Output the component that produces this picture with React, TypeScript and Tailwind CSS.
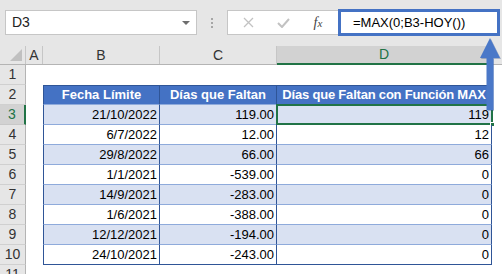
import React from 'react';

const rows = [
  { n: 3, b: '21/10/2022', c: '119.00', d: '119' },
  { n: 4, b: '6/7/2022', c: '12.00', d: '12' },
  { n: 5, b: '29/8/2022', c: '66.00', d: '66' },
  { n: 6, b: '1/1/2021', c: '-539.00', d: '0' },
  { n: 7, b: '14/9/2021', c: '-283.00', d: '0' },
  { n: 8, b: '1/6/2021', c: '-388.00', d: '0' },
  { n: 9, b: '12/12/2021', c: '-194.00', d: '0' },
  { n: 10, b: '24/10/2021', c: '-243.00', d: '0' },
];

const RowHead = ({ n, active }: { n: number; active?: boolean }) => (
  <div
    className={
      active
        ? 'w-[26px] h-full flex items-center justify-center bg-[#d2d2d2] text-[#217346] border-b border-b-[#c8c8c8] border-r-2 border-r-[#217346] text-[14px]'
        : 'w-[26px] h-full flex items-center justify-center bg-[#e6e6e6] text-[#333] border-b border-b-[#d0d0d0] border-r border-r-[#b4b4b4] text-[14px]'
    }
  >
    {n}
  </div>
);

const App = () => {
  const cellBase = 'h-full flex items-center justify-end pr-[2px] text-[13px] text-black';
  const headCell =
    'h-full bg-[#4472c4] border-t border-r border-[#2f5597] border-b border-b-[#8eaadb] flex items-center justify-center text-white font-bold text-[13px] whitespace-nowrap';
  return (
    <div
      className="w-[502px] h-[274px] overflow-hidden bg-white relative"
      style={{ fontFamily: '"Liberation Sans", Arial, sans-serif' }}
    >
      {/* formula bar */}
      <div className="h-[46px] bg-[#e6e6e6] flex items-start">
        <div className="ml-[5px] mt-[10px] w-[192px] h-[25px] bg-white border border-[#c6c6c6] flex items-center justify-between pl-[6px] pr-[6px]">
          <span className="text-[14px] text-[#222]">D3</span>
          <svg width="8" height="4" viewBox="0 0 8 4">
            <path d="M0 0 L8 0 L4 4 Z" fill="#6e6e6e" />
          </svg>
        </div>
        <div className="w-[30px] h-[46px] flex flex-col items-center justify-center gap-[2px] pb-[1px]">
          <div className="w-[2px] h-[2px] bg-[#a6a6a6]" />
          <div className="w-[2px] h-[2px] bg-[#a6a6a6]" />
          <div className="w-[2px] h-[2px] bg-[#a6a6a6]" />
        </div>
        <div className="mt-[10px] w-[111px] h-[25px] bg-white border border-r-0 border-[#c6c6c6] flex items-center">
          <div className="w-[40px] flex justify-center">
            <svg width="11" height="11" viewBox="0 0 11 11">
              <path d="M1 1 L10 10 M10 1 L1 10" stroke="#c2c2c2" strokeWidth="1.3" />
            </svg>
          </div>
          <div className="w-[30px] flex justify-center">
            <svg width="13" height="10" viewBox="0 0 13 10">
              <path d="M1 5 L5 9 L12 1" stroke="#c2c2c2" strokeWidth="2" fill="none" />
            </svg>
          </div>
          <div className="flex-1 flex justify-center">
            <span
              className="italic text-[14px] text-[#444]"
              style={{ fontFamily: '"Liberation Serif", serif' }}
            >
              f<span className="text-[11px]">x</span>
            </span>
          </div>
        </div>
        <div className="mt-[9px] w-[162px] h-[27px] bg-white border-[3px] border-[#4472c4] flex items-center pl-[12px]">
          <span className="text-[13px] text-black">=MAX(0;B3-HOY())</span>
        </div>
      </div>

      {/* column headers */}
      <div className="h-[19px] flex bg-[#e6e6e6] border-b border-b-[#b4b4b4] text-[14px] text-[#333]">
        <div className="w-[26px] h-full border-r border-r-[#c6c6c6] flex items-end justify-end pr-[3px] pb-[3px]">
          <svg width="12" height="12" viewBox="0 0 12 12">
            <path d="M12 0 L12 12 L0 12 Z" fill="#c0c0c0" />
          </svg>
        </div>
        <div className="w-[17px] h-full border-r border-r-[#c6c6c6] flex items-center justify-center">A</div>
        <div className="w-[117px] h-full border-r border-r-[#c6c6c6] flex items-center justify-center">B</div>
        <div className="w-[117px] h-full border-r border-r-[#c6c6c6] flex items-center justify-center">C</div>
        <div className="w-[215px] h-[19px] bg-[#d2d2d2] border-b-2 border-b-[#217346] border-r border-r-[#c6c6c6] flex items-center justify-center text-[#217346]">
          D
        </div>
        <div className="flex-1 h-full" />
      </div>

      {/* row 1 */}
      <div className="h-[20px] flex">
        <RowHead n={1} />
      </div>

      {/* row 2: table header */}
      <div className="h-[20px] flex">
        <RowHead n={2} />
        <div className="w-[17px] h-full" />
        <div className={`w-[117px] border-l ${headCell}`}>Fecha Límite</div>
        <div className={`w-[117px] ${headCell}`}>Días que Faltan</div>
        <div className={`w-[215px] tracking-[-0.2px] ${headCell}`}>Días que Faltan con Función MAX</div>
        <div className="flex-1 h-full" />
      </div>

      {rows.map((r) => {
        const shade = r.n % 2 === 1;
        const last = r.n === 10;
        const bg = shade ? 'bg-[#d9e1f2]' : 'bg-white';
        const bb = last ? 'border-b-[#2f5597]' : 'border-b-[#8eaadb]';
        return (
          <div key={r.n} className="h-[20px] flex">
            <RowHead n={r.n} active={r.n === 3} />
            <div className="w-[17px] h-full" />
            <div className={`w-[117px] ${cellBase} ${bg} border-l border-r border-[#2f5597] border-b ${bb}`}>{r.b}</div>
            <div className={`w-[117px] ${cellBase} ${bg} border-r border-[#2f5597] border-b ${bb}`}>{r.c}</div>
            <div className={`w-[215px] ${cellBase} ${bg} border-r border-[#2f5597] border-b ${bb} relative`}>
              {r.d}
              {r.n === 3 && (
                <div className="absolute left-[-1px] top-[-1px] right-[-2px] bottom-[-1px] border-2 border-[#217346]">
                  <div className="absolute right-[-4px] bottom-[-4px] w-[5px] h-[5px] bg-[#217346] border border-white" />
                </div>
              )}
            </div>
            <div className="flex-1 h-full" />
          </div>
        );
      })}

      {/* row 11, cut by the window edge */}
      <div className="h-[20px] flex">
        <RowHead n={11} />
      </div>

      {/* annotation arrow */}
      <svg className="absolute left-[476px] top-[34px]" width="28" height="80" viewBox="0 0 28 80">
        <path d="M15 5 L25 25 L18 25 L18 77 L12 77 L12 25 L5 25 Z" fill="#2f4f8f" opacity="0.35" />
        <path d="M14 4 L24 24 L17.5 24 L17.5 76 L10.5 76 L10.5 24 L4 24 Z" fill="#4a78c8" />
      </svg>
    </div>
  );
};

export default App;
